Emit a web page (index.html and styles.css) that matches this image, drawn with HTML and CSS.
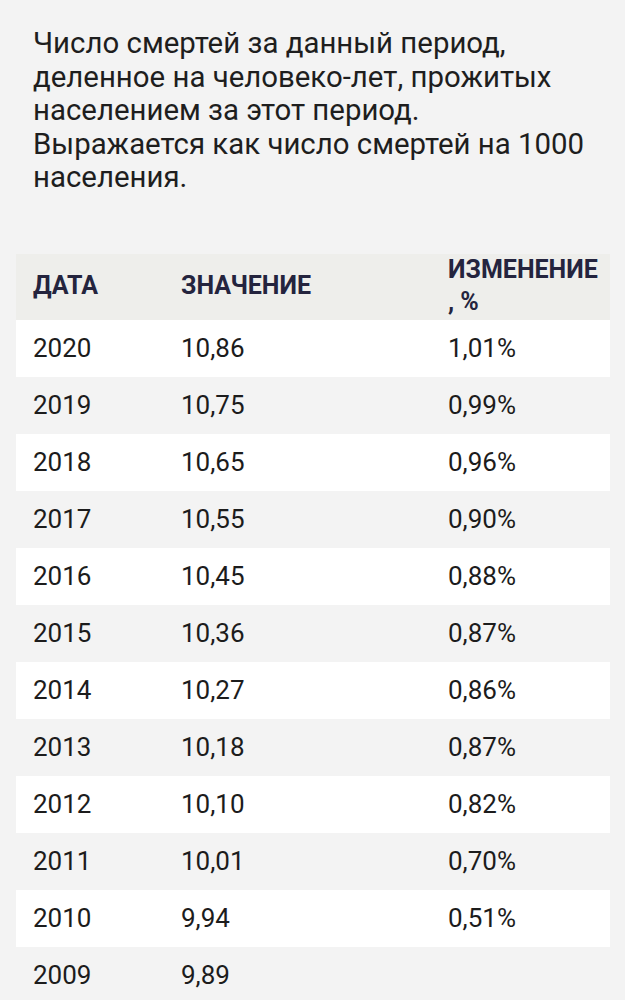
FILE: index.html
```html
<!DOCTYPE html>
<html lang="ru">
<head>
<meta charset="utf-8">
<link rel="stylesheet" href="styles.css">
</head>
<body>
<main class="page">
  <p class="desc">Число смертей за данный период, деленное на человеко-лет, прожитых населением за этот период.<br>Выражается как число смертей на 1000 населения.</p>
  <table class="data">
    <thead>
      <tr><th class="c1">ДАТА</th><th class="c2">ЗНАЧЕНИЕ</th><th class="c3">ИЗМЕНЕНИЕ<br>, %</th></tr>
    </thead>
    <tbody>
      <tr><td>2020</td><td>10,86</td><td>1,01%</td></tr>
      <tr><td>2019</td><td>10,75</td><td>0,99%</td></tr>
      <tr><td>2018</td><td>10,65</td><td>0,96%</td></tr>
      <tr><td>2017</td><td>10,55</td><td>0,90%</td></tr>
      <tr><td>2016</td><td>10,45</td><td>0,88%</td></tr>
      <tr><td>2015</td><td>10,36</td><td>0,87%</td></tr>
      <tr><td>2014</td><td>10,27</td><td>0,86%</td></tr>
      <tr><td>2013</td><td>10,18</td><td>0,87%</td></tr>
      <tr><td>2012</td><td>10,10</td><td>0,82%</td></tr>
      <tr><td>2011</td><td>10,01</td><td>0,70%</td></tr>
      <tr><td>2010</td><td>9,94</td><td>0,51%</td></tr>
      <tr><td>2009</td><td>9,89</td><td></td></tr>
    </tbody>
  </table>
</main>
</body>
</html>
```

FILE: styles.css
```css
html, body {
  margin: 0;
  padding: 0;
  background: #f3f3f3;
}
body {
  font-family: Roboto, "Noto Sans", sans-serif;
  color: #1c1c1c;
}
.page {
  padding: 27px 15px 0 16px;
}
.desc {
  margin: 0 0 59px 17px;
  font-size: 29.4px;
  line-height: 33.5px;
  color: #1e1e1e;
}
.data {
  width: 594px;
  border-collapse: collapse;
  table-layout: fixed;
}
.data th {
  background: #eeeeeb;
  color: #24243e;
  font-weight: 700;
  font-size: 25px;
  line-height: 32px;
  text-align: left;
  padding: 0 0 2px 17px;
  height: 64px;
  vertical-align: middle;
}
.c1 { width: 131px; }
.c2 { width: 250px; }
.data td {
  height: 57px;
  padding: 0 0 0 17px;
  font-size: 26px;
  line-height: 30px;
  color: #1c1c1c;
  vertical-align: middle;
}
.data tbody tr:nth-child(odd) {
  background: #ffffff;
}
.data tbody tr:nth-child(even) {
  background: #f3f3f3;
}
```
